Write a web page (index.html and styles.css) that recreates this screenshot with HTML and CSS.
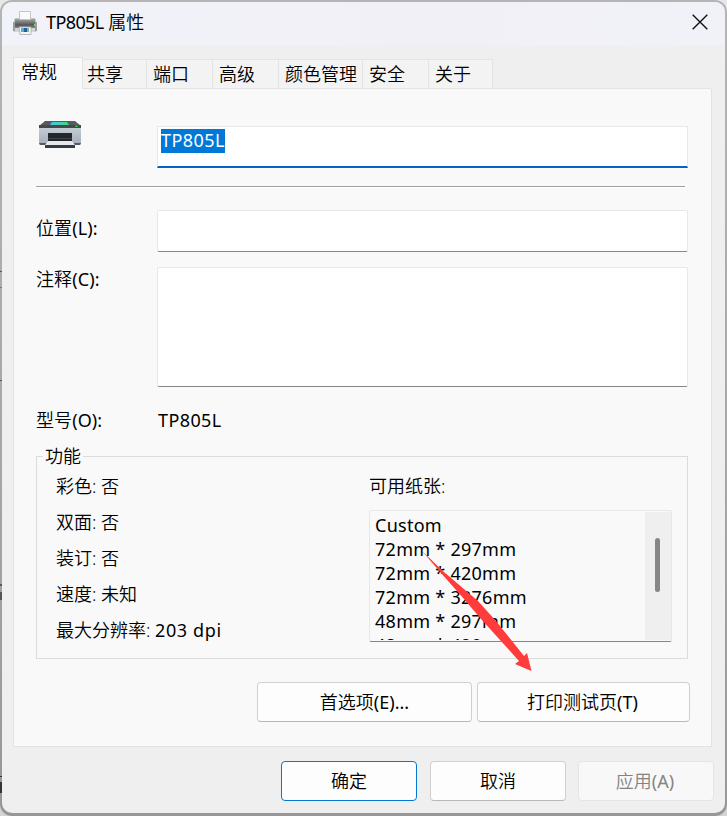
FILE: index.html
```html
<!DOCTYPE html>
<html lang="zh-CN">
<head>
<meta charset="utf-8">
<title>TP805L 属性</title>
<link rel="stylesheet" href="styles.css">
</head>
<body>
<div class="frame">
<main class="window">
  <header class="titlebar">
    <svg class="title-icon" width="26" height="26" viewBox="0 0 26 26">
      <defs>
        <linearGradient id="shell" x2="0" y2="1"><stop stop-color="#a6a6a8"/><stop offset=".65" stop-color="#55565a"/><stop offset="1" stop-color="#85868a"/></linearGradient>
      </defs>
      <path d="M2 10q0-2 2-2h18q2 0 2 2v12H2z" fill="#c5c6c8"/>
      <path d="M3 9h20v9H3z" fill="url(#shell)"/>
      <path d="M7.500 1.500h11v8h-11z" fill="#fafafa" stroke="#c8c3bd"/>
      <path d="M1 12h2v9H1zM23 12h2v9h-2z" fill="#9b9c9f"/>
      <path d="M3 18h20v4H3z" fill="#d4d5d7"/>
      <path d="M7 17h12v7.500H8z" fill="#f3f5f7" stroke="#a9aaac" stroke-width=".8"/>
      <path d="M9 18h3v4H9z" fill="#55aec5"/><path d="M12 18h3v4h-3z" fill="#245fa5"/><path d="M15 18h2v4h-2z" fill="#78bb86"/>
      <path d="M22 14h1.500v2H22z" fill="#71e05c"/>
    </svg>
    <h1 class="title"><span class="title-latin">TP805L</span> 属性</h1>
    <svg class="close" width="16" height="16" viewBox="0 0 16 16"><path d="M.7.7l14.6 14.6M15.3.7L.7 15.3" stroke="#111" stroke-width="1.4"/></svg>
  </header>
  <nav class="tabs">
    <span class="tab tab-active">常规</span><span class="tab w-share">共享</span><span class="tab">端口</span><span class="tab">高级</span><span class="tab w-color">颜色管理</span><span class="tab">安全</span><span class="tab w-about">关于</span>
  </nav>
  <section class="panel">
    <div class="row name-row">
      <div class="label">
        <svg width="42" height="28" viewBox="0 0 42 28">
          <defs>
            <linearGradient id="body" x2="0" y2="1"><stop stop-color="#c3cbd3"/><stop offset="1" stop-color="#a4acb8"/></linearGradient>
            <linearGradient id="screen"><stop stop-color="#41c9ed"/><stop offset="1" stop-color="#43d875"/></linearGradient>
          </defs>
          <path d="M6 1h30l6 5v2H0V6z" fill="#575b60"/>
          <path d="M0 8h42v15q0 2-2 2H2q-2 0-2-2z" fill="url(#body)"/>
          <path d="M0 5h42v3H0z" fill="#45494e"/>
          <path d="M13 2h15l2 3H11z" fill="url(#screen)"/>
          <path d="M36.500 5.500h2V7h-2z" fill="#16ee2b"/>
          <path d="M9 13h24v8H9z" fill="#22272d"/>
          <path d="M9 18h24v1H9z" fill="#3c4248"/>
          <path d="M0 23h7v2H1zM35 23h7l-1 2h-6z" fill="#525a63"/>
          <path d="M9 21h24l3 4H6z" fill="#e7e8ec"/>
          <path d="M6 25h30v3H6z" fill="#353b42"/>
        </svg>
      </div>
      <div class="field name-field"><span class="selected">TP805L</span></div>
    </div>
    <div class="rule"></div>
    <div class="row location-row"><div class="label">位置<span class="key">(L):</span></div><div class="field"></div></div>
    <div class="row comment-row"><div class="label">注释<span class="key">(C):</span></div><div class="field"></div></div>
    <div class="row model-row"><div class="label">型号<span class="key">(O):</span></div><div class="model">TP805L</div></div>
    <section class="group">
      <h2 class="legend">功能</h2>
      <div class="features">
        <div>彩色: 否</div><div>双面: 否</div><div>装订: 否</div><div>速度: 未知</div><div>最大分辨率: <span class="dpi">203 dpi</span></div>
      </div>
      <div class="papers">
        <div class="papers-title">可用纸张:</div>
        <div class="listbox">
          <div class="list"><div>Custom</div><div>72mm * 297mm</div><div>72mm * 420mm</div><div>72mm * 3276mm</div><div>48mm * 297mm</div><div>48mm * 420mm</div></div>
          <div class="scrollbar"><div class="thumb"></div></div>
        </div>
      </div>
    </section>
    <div class="actions"><div class="button preferences">首选项<span class="key">(E)...</span></div><div class="button test">打印测试页<span class="key">(T)</span></div></div>
  </section>
  <footer class="footer"><div class="button default">确定</div><div class="button">取消</div><div class="button disabled">应用<span class="key">(A)</span></div></footer>
</main>
</div>
<svg class="arrow" width="112" height="122" viewBox="0 0 112 122"><path d="M1 1L23 22L57 51L75 71L103 106L106 103L110.500 121L94 114L98 111L60 69L43 49L20 23Z" fill="#ff3b3b"/></svg>
</body>
</html>
```
FILE: styles.css
```css
* { box-sizing: border-box; }
body {
  margin: 0;
  background: linear-gradient(#e8e8e8, #d4d4d4);
  color: #000;
  font: 350 18px/24px "Noto Sans", "Noto Sans CJK SC", sans-serif;
  white-space: nowrap;
}
.frame {
  width: 727px;
  height: 816px;
  padding: 2px 2px 3px;
  border-radius: 12px;
  background:
    linear-gradient(#555, #555) 0 271px / 2px 1px no-repeat,
    linear-gradient(#777, #777) 0 287px / 2px 1px no-repeat,
    linear-gradient(#555, #555) 0 380px / 2px 1px no-repeat,
    linear-gradient(#555, #555) 0 584px / 2px 2px no-repeat,
    linear-gradient(#555, #555) 0 592px / 2px 8px no-repeat,
    linear-gradient(#333, #333) 0 776px / 2px 1px no-repeat,
    linear-gradient(#333, #333) 0 782px / 2px 11px no-repeat,
    linear-gradient(#b5b5b5, #a5a5a5 60%, #979797);
}
.window { height: 811px; width: 723px; border-radius: 10px; overflow: hidden; background: #efefef; }
.titlebar {
  display: flex;
  align-items: center;
  height: 43px;
  padding: 0 17px 0 10px;
  background: linear-gradient(90deg, #f0f3f9, #f2f0f7 60%, #f0f2f8);
}
.title-icon { margin-bottom: 2px; }
.title { flex: 1; margin: 0 0 4px 8px; font-size: 18px; font-weight: 350; }
.title-latin { font-weight: 400; letter-spacing: -.6px; }
.key { font-weight: 400; }
.close { margin-top: -3px; }
.tabs { display: flex; align-items: flex-end; height: 44px; padding-left: 11px; }
.tab {
  width: 66px;
  height: 30px;
  padding: 2px 0 0 6px;
  border: 1px solid #e3e3e3;
  border-left: 0;
  background: #f3f3f3;
}
.tab-active {
  width: 70px;
  height: 32px;
  padding: 2px 0 0 7px;
  border-left: 1px solid #e3e3e3;
  border-bottom-color: #f9f9f9;
  background: #f9f9f9;
}
.w-share { width: 64px; padding-left: 4px; }
.w-color { width: 84px; }
.w-about { width: 64px; }
.panel {
  display: flow-root;
  width: 699px;
  height: 658px;
  margin: 0 0 0 11px;
  padding: 0 0 0 22px;
  border: 1px solid #e3e3e3;
  border-top: 0;
  background: #f9f9f9;
}
.panel::before { content: ""; display: block; height: 1px; margin: -1px 0 37px 47px; background: #e3e3e3; }
.row { display: flex; width: 652px; }
.label { width: 121px; flex: none; letter-spacing: .1px; }
.field { flex: 1; background: #fff; border: 1px solid #e8e8e8; border-bottom-color: #868686; border-radius: 2px; }
.name-row { height: 42px; }
.name-row .label { margin-top: -6px; padding-left: 3px; }
.name-field { display: flex; align-items: flex-start; padding: 2px 3px; border-bottom: 2px solid #0067c0; border-radius: 0; }
.selected { height: 24px; line-height: 23px; background: #0078d7; color: #fff; font-weight: 400; letter-spacing: .45px; }
.rule { width: 649px; height: 2px; margin: 18px 0 22px; background: #a0a0a0; border-bottom: 1px solid #fff; }
.location-row { height: 42px; margin-bottom: 15px; }
.location-row .label { padding-top: 6px; }
.comment-row { height: 120px; }
.model-row { height: 24px; margin-top: 21px; }
.model { padding-left: 1px; font-weight: 400; letter-spacing: .4px; }
.group { display: flex; width: 652px; height: 203px; margin-top: 24px; border: 1px solid #dcdcdc; }
.legend { width: 40px; height: 24px; margin: -13px 0 0 6px; padding-left: 2px; background: #f9f9f9; font-size: 18px; font-weight: 350; }
.features { width: 313px; margin-left: -27px; padding-top: 11px; line-height: 36px; }
.features div { height: 36px; }
.dpi { font-weight: 400; letter-spacing: .6px; }
.papers { padding-top: 17px; }
.papers-title { height: 36px; }
.listbox { display: flex; width: 303px; height: 132px; padding: 1px 0 1px 1px; border: 1px solid #e8e8e8; border-bottom-color: #868686; border-radius: 2px; }
.list { flex: 1; height: 128px; padding: 1px 0 0 4px; overflow: hidden; font-weight: 400; letter-spacing: .27px; }
.scrollbar { width: 26px; padding: 26px 0 0 10px; background: #efefef; }
.thumb { width: 5px; height: 54px; border-radius: 3px; background: #868686; }
.actions { display: flex; gap: 5px; margin: 23px 0 0 221px; }
.button {
  display: flex;
  align-items: center;
  justify-content: center;
  width: 136px;
  height: 40px;
  border: 1px solid #d0d0d0;
  border-bottom-color: #b8b8b8;
  border-radius: 4px;
  background: #fdfdfd;
}
.preferences { width: 215px; }
.test { width: 213px; padding-right: 2px; }
.footer { display: flex; gap: 13px; padding: 14px 0 0 279px; }
.default { border-color: #0078d4; }
.disabled { margin-left: -1px; padding-right: 2px; border-color: #e5e5e5; background: #f8f8f8; color: #838383; }
.arrow { position: absolute; left: 421px; top: 550px; }
```
